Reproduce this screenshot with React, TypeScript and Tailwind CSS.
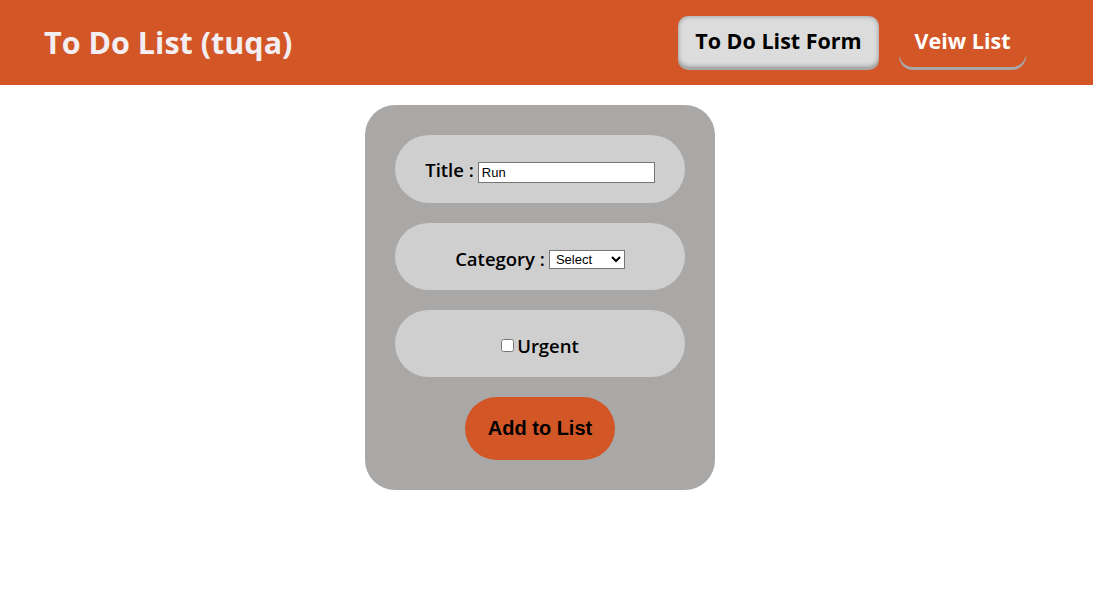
import { useState } from "react";

export default function App() {
  const [title, setTitle] = useState("Run");

  return (
    <div className="min-h-[614px] bg-white font-['Open_Sans','Noto_Sans',sans-serif]">
      <header className="flex h-[85px] items-center justify-between bg-[#d35626] pl-[44px] pr-[67px]">
        <h1 className="text-[30.5px] font-bold text-[#f3eef2]">To Do List (tuqa)</h1>
        <nav className="flex items-center gap-5 pb-[2px]">
          <button className="h-[51px] w-[201px] rounded-[10px] bg-[#dcdcdc] text-[21.5px] font-bold text-black shadow-[inset_0_0_5px_rgba(0,0,0,0.35),0_3px_0_#a8a8a8]">
            To Do List Form
          </button>
          <button className="h-[51px] w-[127px] rounded-[14px] text-[21.5px] font-bold text-white shadow-[0_3px_0_#a8a8a8]">
            Veiw List
          </button>
        </nav>
      </header>

      <main className="flex justify-center pt-5">
        <form
          className="mr-[13px] flex w-[350px] flex-col items-center gap-5 rounded-[30px] bg-[#a9a8a6] p-[30px]"
          onSubmit={(e) => e.preventDefault()}
        >
          <div className="flex h-[68px] w-[290px] items-center justify-center rounded-[34px] bg-[#cfcfcf]">
            <label className="mt-[1px] text-[18.5px] font-semibold text-black">Title :</label>
            <input
              value={title}
              onChange={(e) => setTitle(e.target.value)}
              className="ml-1 mt-[6px] h-[21px] w-[177px] border border-[#767676] bg-white px-[3px] font-['Liberation_Sans',Arial,sans-serif] text-[13px] text-black"
            />
          </div>

          <div className="flex h-[67px] w-[290px] items-center justify-center rounded-[34px] bg-[#cfcfcf] pt-[4px]">
            <label className="text-[18.5px] font-semibold text-black">Category :</label>
            <select className="ml-1 mt-[2px] h-[19px] w-[76px] border border-[#767676] bg-white pl-[2px] font-['Liberation_Sans',Arial,sans-serif] text-[13px] text-black">
              <option>Select</option>
              <option>Work</option>
              <option>Personal</option>
            </select>
          </div>

          <div className="flex h-[67px] w-[290px] items-center justify-center rounded-[34px] bg-[#cfcfcf] pt-[4px]">
            <input type="checkbox" className="h-[13px] w-[13px]" />
            <label className="ml-[3px] text-[18.5px] font-semibold text-black">Urgent</label>
          </div>

          <button
            type="submit"
            className="h-[63px] w-[150px] rounded-[32px] bg-[#d35626] pb-[2px] font-['Liberation_Sans',Arial,sans-serif] text-[20px] font-bold text-black"
          >
            Add to List
          </button>
        </form>
      </main>
    </div>
  );
}
